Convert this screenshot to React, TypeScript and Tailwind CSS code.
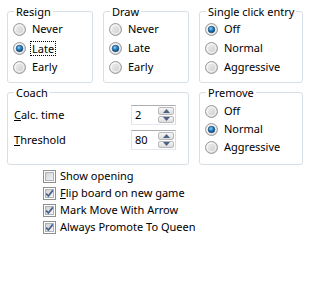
import React from "react";

const font = { fontFamily: '"Noto Sans", "Liberation Sans", sans-serif' };

function Radio({ checked }: { checked?: boolean }) {
  return (
    <svg width="13" height="13" viewBox="0 0 13 13" className="shrink-0">
      <defs>
        <linearGradient id="rfill" x1="0" y1="0" x2="1" y2="1">
          <stop offset="0" stopColor="#f4f4f4" />
          <stop offset="1" stopColor="#c9c9c9" />
        </linearGradient>
        <radialGradient id="rdot" cx="0.4" cy="0.35" r="0.7">
          <stop offset="0" stopColor="#8fd2f5" />
          <stop offset="0.5" stopColor="#1f7fc0" />
          <stop offset="1" stopColor="#0c3f73" />
        </radialGradient>
      </defs>
      <circle cx="6.5" cy="6.5" r="6" fill="url(#rfill)" stroke="#9a9a9a" />
      <circle cx="6.5" cy="6.5" r="4.3" fill="none" stroke="#fbfbfb" strokeWidth="0.8" />
      {checked && <circle cx="6.5" cy="6.5" r="3.3" fill="url(#rdot)" stroke="#10406f" strokeWidth="0.6" />}
    </svg>
  );
}

function Check({ checked }: { checked?: boolean }) {
  return (
    <svg width="13" height="13" viewBox="0 0 13 13" className="shrink-0">
      <defs>
        <linearGradient id="cfill" x1="0" y1="0" x2="1" y2="1">
          <stop offset="0" stopColor="#cbcfd5" />
          <stop offset="1" stopColor="#f6f6f6" />
        </linearGradient>
      </defs>
      <rect x="0.5" y="0.5" width="12" height="12" fill="#fff" stroke="#8e8f8f" />
      <rect x="2.5" y="2.5" width="8" height="8" fill="url(#cfill)" stroke="#aeb3b9" />
      {checked && (
        <path d="M3.2 6.6 L5.4 9 L9.8 3.4" fill="none" stroke="#4a5f8c" strokeWidth="1.7" />
      )}
    </svg>
  );
}

type Opt = { label: string; checked?: boolean; focus?: boolean };

function Group({
  title,
  width,
  height,
  rowH,
  pt,
  options,
}: {
  title: string;
  width: string;
  height: string;
  rowH: string;
  pt: string;
  options: Opt[];
}) {
  return (
    <fieldset className={`${width} ${height} border border-[#d5dfe5] rounded-[3px]`}>
      <legend className="ml-[6px] px-[2px] leading-[15px]">{title}</legend>
      <div className={`flex flex-col ${pt}`}>
        {options.map((o) => (
          <div key={o.label} className={`flex items-center ${rowH} pl-[5px]`}>
            <Radio checked={o.checked} />
            {o.focus ? (
              <span className="ml-[4px] border border-dotted border-black leading-[13px] px-[1px]">
                {o.label}
              </span>
            ) : (
              <span className="ml-[6px]">{o.label}</span>
            )}
          </div>
        ))}
      </div>
    </fieldset>
  );
}

function Spin({ value }: { value: string }) {
  return (
    <div className="flex h-[20px] w-[45px] border border-[#abadb3] border-r-[#dbdfe6] border-b-[#e3e9ef] border-l-[#e2e3ea] bg-white">
      <div className="flex-1 pl-[3px] leading-[18px]">{value}</div>
      <div className="flex flex-col gap-[1px] w-[17px] py-[1px] pr-[1px]">
        {["up", "down"].map((d) => (
          <div
            key={d}
            className="flex-1 flex items-center justify-center border border-[#b9b9b9] rounded-[2px] bg-gradient-to-b from-[#f6f6f6] to-[#dcdcdc]"
          >
            <svg width="7" height="4" viewBox="0 0 7 4">
              {d === "up" ? (
                <path d="M0 4 L3.5 0 L7 4 Z" fill="#4d6185" />
              ) : (
                <path d="M0 0 L3.5 4 L7 0 Z" fill="#4d6185" />
              )}
            </svg>
          </div>
        ))}
      </div>
    </div>
  );
}

export default function App() {
  return (
    <div className="w-[329px] h-[281px] bg-white text-black text-[11px] pt-[4px] pl-[7px]" style={font}>
      <div className="flex gap-[10px]">
        <Group
          title="Resign"
          width="w-[86px]"
          height="h-[79px]"
          rowH="h-[19px]"
          pt="pt-[1px]"
          options={[{ label: "Never" }, { label: "Late", checked: true, focus: true }, { label: "Early" }]}
        />
        <Group
          title="Draw"
          width="w-[86px]"
          height="h-[79px]"
          rowH="h-[19px]"
          pt="pt-[1px]"
          options={[{ label: "Never" }, { label: "Late", checked: true }, { label: "Early" }]}
        />
        <Group
          title="Single click entry"
          width="w-[104px]"
          height="h-[79px]"
          rowH="h-[19px]"
          pt="pt-[1px]"
          options={[{ label: "Off", checked: true }, { label: "Normal" }, { label: "Aggressive" }]}
        />
      </div>

      <div className="flex gap-[10px] mt-[2px]">
        <fieldset className="w-[182px] h-[80px] border border-[#d5dfe5] rounded-[3px]">
          <legend className="ml-[6px] px-[2px] leading-[15px]">Coach</legend>
          <div className="flex flex-col gap-[5px] pt-[5px] pl-[6px] pr-[12px]">
            <div className="flex items-center justify-between h-[20px]">
              <span>
                <span className="underline">C</span>alc. time
              </span>
              <Spin value="2" />
            </div>
            <div className="flex items-center justify-between h-[20px]">
              <span>
                <span className="underline">T</span>hreshold
              </span>
              <Spin value="80" />
            </div>
          </div>
        </fieldset>
        <Group
          title="Premove"
          width="w-[104px]"
          height="h-[80px]"
          rowH="h-[18px]"
          pt="pt-[2px]"
          options={[{ label: "Off" }, { label: "Normal", checked: true }, { label: "Aggressive" }]}
        />
      </div>

      <div className="flex flex-col mt-[3px] pl-[36px]">
        {[
          { label: "Show opening", checked: false },
          { label: "lip board on new game", checked: true, acc: "F" },
          { label: "Mark Move With Arrow", checked: true },
          { label: "Always Promote To Queen", checked: true },
        ].map((c) => (
          <div key={c.label} className="flex items-center h-[17px]">
            <Check checked={c.checked} />
            <span className="ml-[4px]">
              {c.acc && <span className="underline">{c.acc}</span>}
              {c.label}
            </span>
          </div>
        ))}
      </div>
    </div>
  );
}
